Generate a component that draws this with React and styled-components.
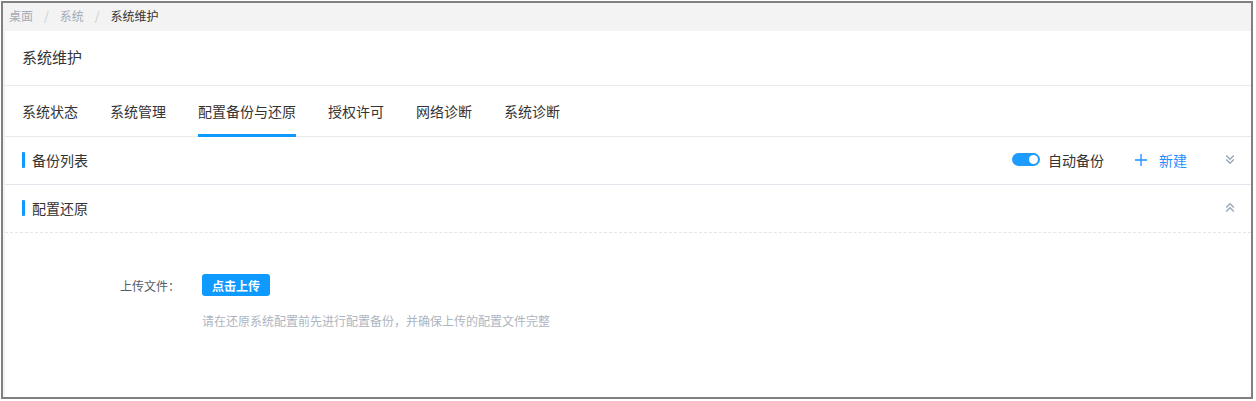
import React, { useState } from 'react'
import styled, { createGlobalStyle } from 'styled-components'

const GlobalStyle = createGlobalStyle`
  html, body {
    margin: 0;
    padding: 0;
    background: #ffffff;
  }
  body {
    font-family: "Noto Sans CJK SC", "Noto Sans", "Liberation Sans", sans-serif;
    color: #333;
  }
  * { box-sizing: border-box; }
`

const Outer = styled.div`
  padding: 1px 3px 2px 1px;
  height: 401px;
`

const Frame = styled.div`
  height: 100%;
  border: 2px solid #808080;
  background: #f3f3f3;
  display: flex;
  flex-direction: column;
`

const Breadcrumb = styled.div`
  height: 28px;
  display: flex;
  align-items: center;
  padding: 0 0 3px 6px;
  font-size: 12px;
  flex-shrink: 0;
`

const Crumb = styled.span`
  color: ${p => (p.$current ? '#333' : '#a3abb9')};
`

const Sep = styled.span`
  color: #c5cad3;
  margin: 0 11px;
`

const Panel = styled.div`
  flex: 1;
  margin-left: 2px;
  background: #fff;
  display: flex;
  flex-direction: column;
`

const PageTitle = styled.div`
  height: 55px;
  display: flex;
  align-items: center;
  padding: 0 0 3px 17px;
  font-size: 15px;
  color: #333;
  border-bottom: 1px solid #e6e9ee;
`

const Tabs = styled.div`
  height: 51px;
  display: flex;
  gap: 32px;
  padding-left: 17px;
  border-bottom: 1px solid #e6e9ee;
`

const Tab = styled.div`
  position: relative;
  display: flex;
  align-items: center;
  font-size: 14px;
  color: #333;
  &::after {
    content: '';
    position: absolute;
    left: 0;
    right: 0;
    bottom: -1px;
    height: 3px;
    background: ${p => (p.$active ? '#0e9aff' : 'transparent')};
  }
`

const SectionRow = styled.div`
  height: 48px;
  display: flex;
  align-items: center;
  padding: 0 16px 2px 17px;
  border-bottom: 1px ${p => (p.$dashed ? 'dashed' : 'solid')} #e1e6ed;
`

const SectionTitle = styled.div`
  display: flex;
  align-items: center;
  font-size: 14px;
  color: #333;
  flex: 1;
  &::before {
    content: '';
    width: 3px;
    height: 16px;
    background: #0e9aff;
    margin-right: 7px;
    border-radius: 1px;
  }
`

const Actions = styled.div`
  display: flex;
  align-items: center;
`

const Switch = styled.button`
  width: 28px;
  height: 13px;
  border-radius: 7px;
  border: none;
  padding: 0;
  background: ${p => (p.$on ? '#1e9bff' : '#c4c8cf')};
  position: relative;
  cursor: pointer;
  &::after {
    content: '';
    position: absolute;
    top: 2px;
    left: ${p => (p.$on ? '17px' : '2px')};
    width: 9px;
    height: 9px;
    border-radius: 50%;
    background: #fff;
  }
`

const SwitchLabel = styled.span`
  font-size: 14px;
  color: #333;
  margin-left: 8px;
  margin-right: 31px;
`

const NewButton = styled.span`
  display: flex;
  align-items: center;
  gap: 12px;
  font-size: 14px;
  color: #1e8fff;
  margin-right: 38px;
  cursor: pointer;
`

const Chevron = styled.span`
  display: flex;
  width: 10px;
  justify-content: center;
`

const UploadArea = styled.div`
  padding: 41px 0 0 115px;
  display: grid;
  grid-template-columns: 82px auto;
  row-gap: 16px;
  align-items: center;
`

const FieldLabel = styled.span`
  font-size: 12px;
  color: #555c66;
`

const UploadButton = styled.button`
  justify-self: start;
  height: 22px;
  padding: 0 10px;
  border: none;
  border-radius: 3px;
  background: #0e9aff;
  color: #fff;
  font-family: inherit;
  font-size: 12px;
  font-weight: 600;
  cursor: pointer;
`

const Hint = styled.span`
  grid-column: 2;
  font-size: 12px;
  color: #aeb5c0;
`

const DoubleChevron = ({ up }) => (
  <svg width="10" height="11" viewBox="0 0 10 11" fill="none" stroke="#9aa6bb" strokeWidth="1.4">
    {up ? (
      <>
        <path d="M1.2 5.5 L5 1.8 L8.8 5.5" />
        <path d="M1.2 9.5 L5 5.8 L8.8 9.5" />
      </>
    ) : (
      <>
        <path d="M1.2 1.5 L5 5.2 L8.8 1.5" />
        <path d="M1.2 5.5 L5 9.2 L8.8 5.5" />
      </>
    )}
  </svg>
)

const PlusIcon = () => (
  <svg width="12" height="12" viewBox="0 0 12 12" stroke="#1e8fff" strokeWidth="1.3">
    <path d="M6 0 V12 M0 6 H12" />
  </svg>
)

const tabs = ['系统状态', '系统管理', '配置备份与还原', '授权许可', '网络诊断', '系统诊断']

export default function App() {
  const [auto, setAuto] = useState(true)
  return (
    <>
      <GlobalStyle />
      <Outer>
        <Frame>
          <Breadcrumb>
            <Crumb>桌面</Crumb>
            <Sep>/</Sep>
            <Crumb>系统</Crumb>
            <Sep>/</Sep>
            <Crumb $current>系统维护</Crumb>
          </Breadcrumb>
          <Panel>
            <PageTitle>系统维护</PageTitle>
            <Tabs>
              {tabs.map((t, i) => (
                <Tab key={t} $active={i === 2}>{t}</Tab>
              ))}
            </Tabs>
            <SectionRow>
              <SectionTitle>备份列表</SectionTitle>
              <Actions>
                <Switch $on={auto} onClick={() => setAuto(!auto)} />
                <SwitchLabel>自动备份</SwitchLabel>
                <NewButton>
                  <PlusIcon />
                  新建
                </NewButton>
                <Chevron><DoubleChevron /></Chevron>
              </Actions>
            </SectionRow>
            <SectionRow $dashed>
              <SectionTitle>配置还原</SectionTitle>
              <Chevron><DoubleChevron up /></Chevron>
            </SectionRow>
            <UploadArea>
              <FieldLabel>上传文件：</FieldLabel>
              <UploadButton>点击上传</UploadButton>
              <Hint>请在还原系统配置前先进行配置备份，并确保上传的配置文件完整</Hint>
            </UploadArea>
          </Panel>
        </Frame>
      </Outer>
    </>
  )
}
